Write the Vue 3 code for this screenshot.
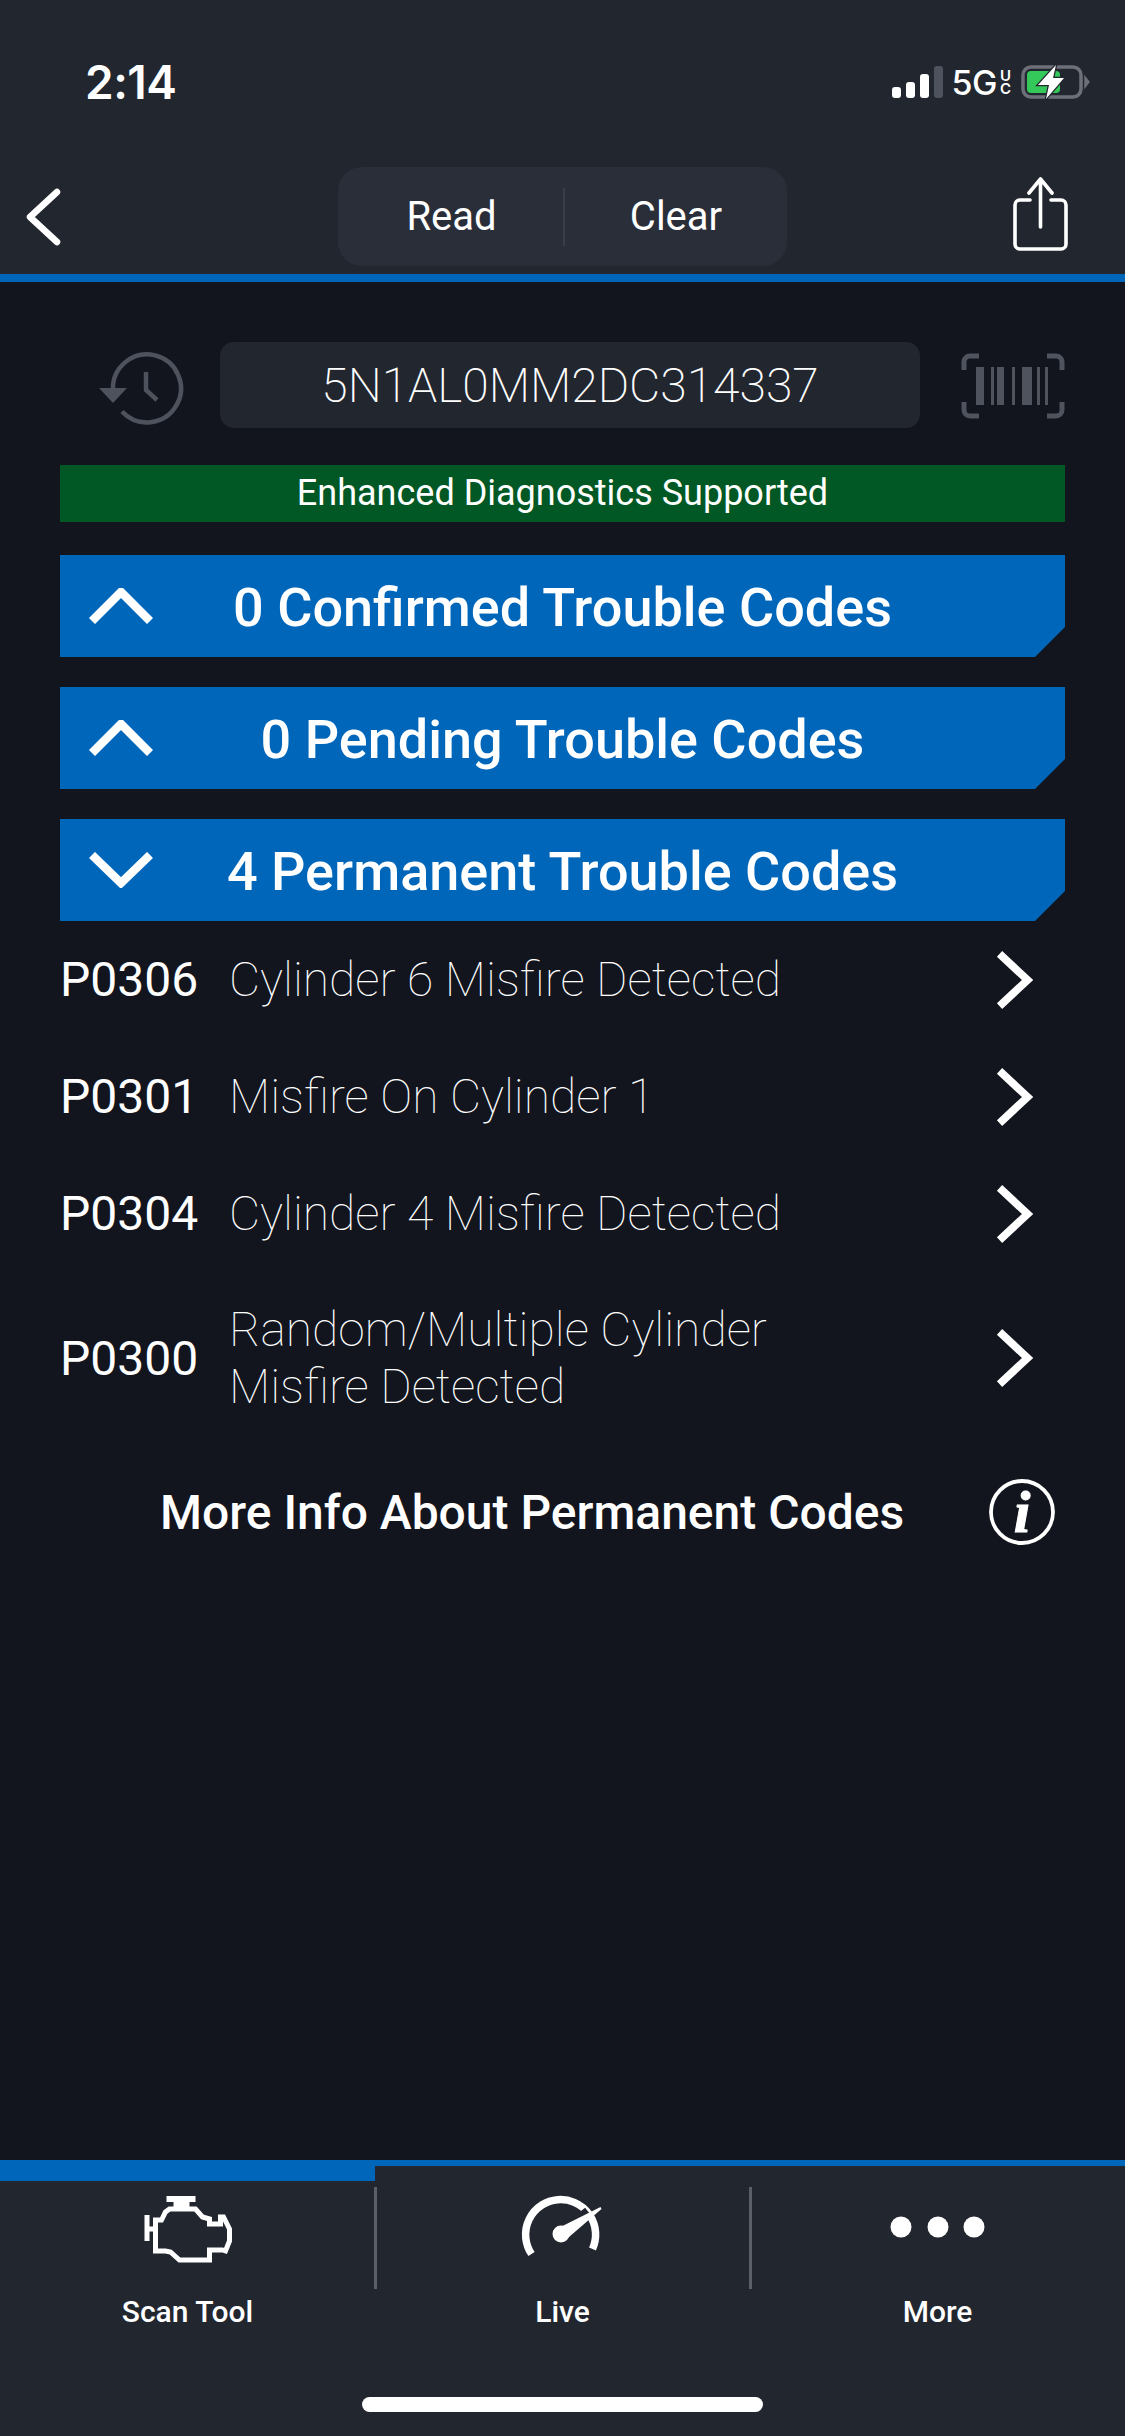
<template>
  <div class="scan-page">
    <header class="top">
      <div class="status-bar">
        <span class="time">2:14</span>
        <div class="status-right">
          <div class="signal">
            <i class="bar b1"></i><i class="bar b2"></i><i class="bar b3"></i><i class="bar b4"></i>
          </div>
          <span class="net">5G</span>
          <span class="net-sub">UC</span>
          <svg class="battery" viewBox="0 0 72 36" width="72" height="36">
            <rect x="2" y="3" width="58" height="30" rx="8" fill="none" stroke="#6d7078" stroke-width="3.5"/>
            <rect x="6" y="7" width="33" height="22" rx="4" fill="#34c759"/>
            <path d="M64 13l4 5-4 5z" fill="#6d7078" stroke="#6d7078" stroke-width="1.5"/>
            <path d="M35 1L17 21h11L25 35l18-21H32z" fill="#fff" stroke="#22262f" stroke-width="2.5" paint-order="stroke"/>
          </svg>
        </div>
      </div>
      <div class="nav">
        <button class="nav-back">
          <svg viewBox="0 0 40 60" width="40" height="60" fill="none" stroke="#fff" stroke-width="6.500" stroke-linecap="round" stroke-linejoin="round"><path d="M33 5L6 30l27 25"/></svg>
        </button>
        <div class="segment">
          <span class="seg-btn">Read</span>
          <span class="seg-btn">Clear</span>
        </div>
        <button class="nav-share">
          <svg viewBox="0 0 60 76" width="60" height="76" fill="none" stroke="#fff" stroke-width="3.600" stroke-linecap="round" stroke-linejoin="round">
            <path d="M19 23H9a5 5 0 0 0-5 5v39a5 5 0 0 0 5 5h41a5 5 0 0 0 5-5V28a5 5 0 0 0-5-5H40"/>
            <path d="M29.500 50V3M18 16L29.500 2 41 16"/>
          </svg>
        </button>
      </div>
    </header>

    <main class="main">
      <div class="vin-row">
        <svg class="vin-history" viewBox="0 0 120 100" width="120" height="100" fill="none" stroke="#4e525c" stroke-width="4.500">
          <path d="M33 55a34 34 0 1 1 9 21.500"/>
          <path d="M19 53h28L33 68z" fill="#4e525c" stroke="none"/>
          <path d="M66 37v18l11 10"/>
        </svg>
        <div class="vin-box">5N1AL0MM2DC314337</div>
        <svg class="vin-barcode" viewBox="0 0 104 66" width="104" height="66" fill="none" stroke="#4f535d" stroke-width="5">
          <path d="M3 17V9a6 6 0 0 1 6-6h9M86 3h9a6 6 0 0 1 6 6v8M3 49v8a6 6 0 0 0 6 6h9M101 49v8a6 6 0 0 1-6 6h-9"/>
          <g fill="#4f535d" stroke="none">
            <rect x="15" y="14" width="8" height="38"/><rect x="30" y="14" width="3" height="38"/>
            <rect x="36" y="14" width="7" height="38"/><rect x="51" y="14" width="3" height="38"/>
            <rect x="61" y="14" width="10" height="38"/><rect x="76" y="14" width="3" height="38"/>
            <rect x="84" y="14" width="3" height="38"/>
          </g>
        </svg>
      </div>

      <div class="enhanced">Enhanced Diagnostics Supported</div>

      <div class="banners">
        <div class="banner" v-for="b in banners" :key="b.label">
          <svg class="banner-chev" viewBox="0 0 64 36" width="64" height="36" fill="none" stroke="#fff" stroke-width="8.500">
            <path :d="b.open ? 'M3 3l29 28L61 3' : 'M3 33L32 4l29 29'"/>
          </svg>
          <span>{{ b.label }}</span>
        </div>
      </div>

      <div class="code-row" v-for="c in codes" :key="c.code">
        <span class="code">{{ c.code }}</span>
        <span class="desc"><span v-for="l in c.lines" :key="l" class="desc-line">{{ l }}</span></span>
        <svg class="row-chev" viewBox="0 0 40 60" width="40" height="58" fill="none" stroke="#fff" stroke-width="8"><path d="M4 3l29 27L4 57"/></svg>
      </div>

      <div class="more-info">
        <span>More Info About Permanent Codes</span>
        <svg viewBox="0 0 70 70" width="70" height="70">
          <circle cx="35" cy="35" r="31" fill="none" stroke="#fff" stroke-width="3.800"/>
          <text x="35" y="55" text-anchor="middle" class="info-i">i</text>
        </svg>
      </div>
    </main>

    <nav class="tabs">
      <div class="tab-grid">
        <div class="tab active">
          <div class="tab-icon">
            <svg viewBox="2.500 8 130 100" width="130" height="100" fill="none" stroke="#fff" stroke-width="5">
              <path d="M35 41h6l4-8 4-3h26l7 8 7 2v5h11v-7h3l6 12v12l-4 10-3-1H89v10H59l-9-8-5-1H35z"/>
              <path d="M46 17h29v6H69v7H53v-7h-7z" fill="#fff" stroke="none"/>
              <path d="M26.500 36v26M26 50h9"/>
            </svg>
          </div>
          <span class="tab-label">Scan Tool</span>
        </div>
        <div class="tab">
          <div class="tab-icon">
            <svg viewBox="-2.500 8 130 100" width="130" height="100" fill="none">
              <path d="M31 75A35 35 0 1 1 92 70" stroke="#fff" stroke-width="7.500"/>
              <path d="M60 55L88 33" stroke="#22262f" stroke-width="11"/>
              <circle cx="60.500" cy="55" r="8.500" fill="#fff"/>
              <path d="M56 50L100 28l1 2-36 31z" fill="#fff"/>
            </svg>
          </div>
          <span class="tab-label">Live</span>
        </div>
        <div class="tab">
          <div class="tab-icon">
            <svg viewBox="0 8 130 100" width="130" height="100" fill="#fff">
              <circle cx="28" cy="48" r="10.500"/><circle cx="65" cy="48" r="10.500"/><circle cx="101" cy="48" r="10.500"/>
            </svg>
          </div>
          <span class="tab-label">More</span>
        </div>
      </div>
      <div class="home-bar"></div>
    </nav>
  </div>
</template>

<script setup>
const banners = [
  { label: '0 Confirmed Trouble Codes', open: false },
  { label: '0 Pending Trouble Codes', open: false },
  { label: '4 Permanent Trouble Codes', open: true },
]
const codes = [
  { code: 'P0306', lines: ['Cylinder 6 Misfire Detected'] },
  { code: 'P0301', lines: ['Misfire On Cylinder 1'] },
  { code: 'P0304', lines: ['Cylinder 4 Misfire Detected'] },
  { code: 'P0300', lines: ['Random/Multiple Cylinder', 'Misfire Detected'] },
]
</script>

<style>
html, body { margin: 0; background: #12151e; }
</style>

<style scoped>
.scan-page { width: 1125px; height: 2436px; display: flex; flex-direction: column; background: #12151e; color: #fff; font-family: Roboto, "Liberation Sans", sans-serif; overflow: hidden; }
.top { height: 282px; box-sizing: border-box; background: #22262f; border-bottom: 8px solid #0066ba; }
.status-bar { height: 64px; padding: 50px 32px 0 85px; display: flex; justify-content: space-between; align-items: center; font-family: Inter, "Liberation Sans", sans-serif; }
.time { font-size: 46px; font-weight: 600; letter-spacing: -0.5px; }
.status-right { display: flex; align-items: center; }
.signal { display: flex; align-items: flex-end; gap: 5px; height: 32px; margin-right: 9px; }
.bar { display: block; width: 9px; border-radius: 3px; background: #fff; }
.b1 { height: 11px; }
.b2 { height: 16px; }
.b3 { height: 24px; }
.b4 { height: 32px; background: #4e525c; }
.net { font-size: 34px; font-weight: 500; letter-spacing: -0.5px; }
.net-sub { width: 12px; font-size: 15px; font-weight: 600; line-height: 13px; word-break: break-all; margin: 0 9px 0 3px; }
.battery { display: block; }
.nav { display: grid; grid-template-columns: 1fr 449px 1fr; align-items: center; margin-top: 53px; height: 99px; }
.nav-back, .nav-share { background: none; border: none; padding: 0; display: flex; }
.nav-back { padding-left: 24px; }
.nav-share { justify-content: flex-end; padding: 0 54px 0 0; margin-top: -4px; }
.segment { height: 99px; background: #2a2e39; border-radius: 24px; display: grid; grid-template-columns: 227px 222px; font-size: 40px; }
.seg-btn { display: flex; align-items: center; justify-content: center; position: relative; }
.seg-btn:first-child::after { content: ""; position: absolute; right: 0; top: 21px; bottom: 20px; width: 2px; background: #3a3e49; }
.main { flex: 1; padding: 0 60px; }
.vin-row { display: flex; align-items: center; height: 86px; margin-top: 60px; position: relative; }
.vin-history { margin: 0 20px 0 20px; flex: none; }
.vin-box { width: 700px; height: 86px; box-sizing: border-box; margin-right: 41px; background: #22262f; border-radius: 14px; display: flex; align-items: center; justify-content: center; font-size: 48px; font-weight: 200; }
.vin-barcode { flex: none; margin-top: 2px; }
.enhanced { margin-top: 37px; height: 57px; background: #015824; display: flex; align-items: center; justify-content: center; font-size: 36px; font-weight: 400; padding-bottom: 2px; box-sizing: border-box; }
.banners { display: flex; flex-direction: column; gap: 30px; margin-top: 33px; }
.banner { position: relative; height: 102px; padding-top: 2px; box-sizing: border-box; background: #0066ba; clip-path: polygon(0 0, 100% 0, 100% 72px, 975px 100%, 0 100%); display: flex; align-items: center; justify-content: center; font-size: 54px; font-weight: 500; }
.banner-chev { position: absolute; left: 29px; top: 33px; }
.code-row { display: flex; align-items: center; padding: 29px 0; min-height: 117px; box-sizing: border-box; }
.code { width: 169px; flex: none; font-size: 48px; }
.desc { flex: 1; font-size: 48px; font-weight: 100; line-height: 57px; color: #fff; }
.desc-line { display: block; }
.row-chev { margin-right: 30px; flex: none; }
.more-info { display: flex; align-items: center; justify-content: space-between; height: 70px; margin-top: 33px; padding: 0 8px 0 100px; font-size: 48px; font-weight: 500; }
.info-i { font-family: "Liberation Serif", serif; font-style: italic; font-weight: 700; font-size: 60px; fill: #fff; stroke: #fff; stroke-width: 1px; }
.tabs { height: 276px; box-sizing: border-box; background: #22262f; border-top: 6px solid #0066ba; display: flex; flex-direction: column; }
.tab-grid { display: grid; grid-template-columns: repeat(3, 1fr); }
.tab { position: relative; display: flex; flex-direction: column; align-items: center; padding-top: 21px; }
.tab.active::before { content: ""; position: absolute; left: 0; right: 0; top: 0; height: 15px; background: #0066ba; }
.tab-icon { width: 100%; height: 102px; display: flex; justify-content: center; box-sizing: border-box; }
.tab + .tab .tab-icon { border-left: 3px solid #5b5f68; margin-left: -3px; }
.tab-label { margin-top: 5px; font-size: 30px; font-weight: 500; line-height: 36px; }
.home-bar { width: 401px; height: 15px; margin: 67px auto 0; background: #fff; border-radius: 8px; }
</style>
